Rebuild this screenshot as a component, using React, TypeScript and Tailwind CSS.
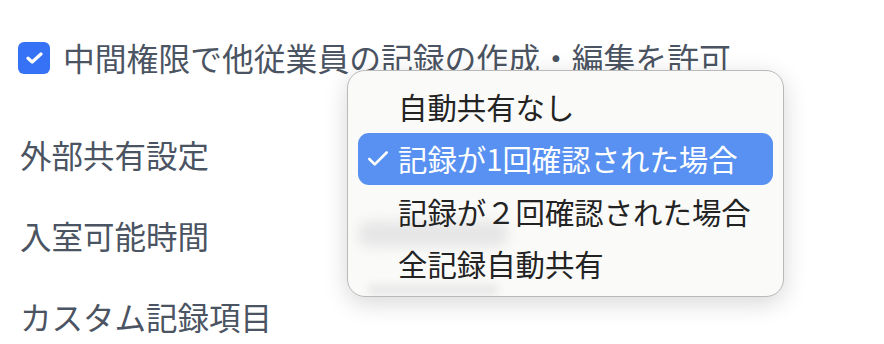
import { Check } from 'lucide-react';

const options = ['自動共有なし', '記録が1回確認された場合', '記録が２回確認された場合', '全記録自動共有'];
const selected = 1;

export default function App() {
  return (
    <div
      className="relative w-[884px] h-[344px] overflow-hidden bg-white text-[#4b5462]"
      style={{ fontFamily: '"Noto Sans CJK JP", "Noto Sans", sans-serif' }}
    >
      <div className="flex flex-col pl-[18px] pt-[42px]">
        <label className="flex items-center gap-[13px] h-[32px]">
          <span className="flex items-center justify-center w-[32px] h-[32px] rounded-[6px] bg-[#3572f5]">
            <svg width="17" height="12" viewBox="0 0 17 12" fill="none">
              <path d="M2 6.2 L6.2 10 L15 2" stroke="white" strokeWidth="3.2" strokeLinecap="round" strokeLinejoin="round" />
            </svg>
          </span>
          <span className="text-[31.8px] leading-none">中間権限で他従業員の記録の作成・編集を許可</span>
        </label>
        <div className="flex flex-col pl-[2px] mt-[64px] gap-[49px] text-[31.5px] leading-[32px]">
          <div>外部共有設定</div>
          <div>入室可能時間</div>
          <div>カスタム記録項目</div>
        </div>
      </div>

      {/* dropdown menu */}
      <div className="absolute left-[347px] top-[70px] w-[437px] h-[227px] rounded-[18px] border border-[#b9b9b9] bg-[#fafaf9] shadow-[0_6px_24px_rgba(0,0,0,0.16)] overflow-hidden">
        <div className="absolute left-[10px] top-[150px] w-[150px] h-[26px] rounded-full bg-[#e6e6e6] blur-[6px]" />
        <div className="absolute left-[20px] top-[214px] w-[130px] h-[10px] rounded-full bg-[#e6e6e6] blur-[4px]" />
        <div className="relative flex flex-col px-[10px] pt-[9px] text-[29.4px] leading-none text-[#232323]">
          {options.map((o, i) => (
            <div
              key={o}
              className={
                i === selected
                  ? 'flex items-center h-[52.5px] rounded-[11px] bg-[#5891f1] text-white'
                  : 'flex items-center h-[52.5px]'
              }
            >
              <span className="w-[40px] flex justify-center">
                {i === selected && <Check size={26} strokeWidth={2.4} className="ml-[-1px]" />}
              </span>
              <span>{o}</span>
            </div>
          ))}
        </div>
      </div>
    </div>
  );
}
